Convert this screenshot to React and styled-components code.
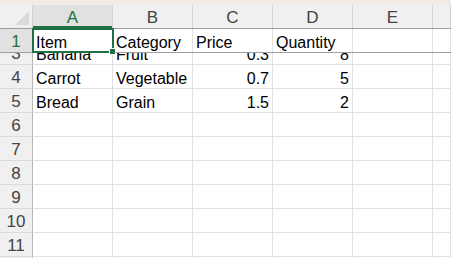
import styled, { createGlobalStyle } from "styled-components";

const Global = createGlobalStyle`
  html, body {
    margin: 0;
    padding: 0;
    background: #ffffff;
  }
  body {
    font-family: "Liberation Sans", Arial, sans-serif;
  }
`;

const Sheet = styled.div`
  width: 451px;
  height: 258px;
  overflow: hidden;
  display: flex;
  flex-direction: column;
  background: #ffffff;
`;

const TopStrip = styled.div`
  height: 5px;
  flex: none;
  background: #f0ebe3;
`;

const Row = styled.div`
  display: grid;
  grid-template-columns: 33px repeat(5, 80px) 1fr;
  height: 24px;
  flex: none;
  box-sizing: border-box;
`;

const HeaderRow = styled(Row)`
  background: #f0f0f0;
  border-bottom: 1px solid #9f9f9f;
`;

const FrozenRow = styled(Row)`
  border-bottom: 1px solid #9f9f9f;
`;

const Corner = styled.div`
  position: relative;
  border-right: 1px solid #d4d4d4;
  &::after {
    content: "";
    position: absolute;
    right: 3px;
    bottom: 3px;
    width: 0;
    height: 0;
    border-left: 14px solid transparent;
    border-bottom: 14px solid #dadada;
  }
`;

const ColHead = styled.div`
  display: flex;
  align-items: flex-end;
  justify-content: center;
  font-size: 17px;
  box-sizing: border-box;
  border-right: 1px solid #d4d4d4;
  color: ${(p) => (p.$active ? "#1e7145" : "#444444")};
  background: ${(p) => (p.$active ? "#e1e1e1" : "transparent")};
  box-shadow: ${(p) => (p.$active ? "inset 0 -2px 0 #1e7145" : "none")};
  padding-bottom: 0;
`;

const RowHead = styled.div`
  display: flex;
  align-items: flex-end;
  justify-content: center;
  padding-bottom: 0;
  font-size: 17px;
  box-sizing: border-box;
  background: ${(p) => (p.$active ? "#e1e1e1" : "#f0f0f0")};
  color: ${(p) => (p.$active ? "#1e7145" : "#444444")};
  border-right: 1px solid #b8b8b8;
  border-bottom: ${(p) => (p.$last ? "none" : "1px solid #dadada")};
`;

const Cell = styled.div`
  position: relative;
  display: flex;
  align-items: flex-end;
  justify-content: ${(p) => (p.$num ? "flex-end" : "flex-start")};
  padding: 0 3px 0 3px;
  box-sizing: border-box;
  font-size: 16px;
  color: #000000;
  white-space: nowrap;
  overflow: visible;
  border-right: 1px solid #e1e1e1;
  border-bottom: ${(p) => (p.$last ? "none" : "1px solid #e1e1e1")};
`;

const ActiveCell = styled(Cell)`
  outline: 2px solid #1e7145;
  outline-offset: -1px;
  z-index: 1;
  &::after {
    content: "";
    position: absolute;
    right: -4px;
    bottom: -3px;
    width: 5px;
    height: 5px;
    background: #1e7145;
    border: 1px solid #ffffff;
  }
`;

const Body = styled.div`
  flex: 1;
  overflow: hidden;
`;

const Scrolled = styled.div`
  margin-top: -12px;
`;

const columns = ["A", "B", "C", "D", "E", ""];

const data = [
  { n: 3, cells: ["Banana", "Fruit", 0.3, 8] },
  { n: 4, cells: ["Carrot", "Vegetable", 0.7, 5] },
  { n: 5, cells: ["Bread", "Grain", 1.5, 2] },
  { n: 6, cells: [] },
  { n: 7, cells: [] },
  { n: 8, cells: [] },
  { n: 9, cells: [] },
  { n: 10, cells: [] },
  { n: 11, cells: [] },
  { n: 12, cells: [] },
];

const DataRow = ({ n, cells }) => (
  <Row>
    <RowHead>{n}</RowHead>
    {columns.map((c, i) => {
      const v = cells[i];
      return (
        <Cell key={i} $num={typeof v === "number"}>
          {v ?? ""}
        </Cell>
      );
    })}
  </Row>
);

const App = () => {
  return (
    <>
      <Global />
      <Sheet>
        <TopStrip />
        <HeaderRow>
          <Corner />
          {columns.map((c, i) => (
            <ColHead key={i} $active={c === "A"}>
              {c}
            </ColHead>
          ))}
        </HeaderRow>
        <FrozenRow>
          <RowHead $active $last>
            1
          </RowHead>
          <ActiveCell $last>Item</ActiveCell>
          <Cell $last>Category</Cell>
          <Cell $last>Price</Cell>
          <Cell $last>Quantity</Cell>
          <Cell $last />
          <Cell $last />
        </FrozenRow>
        <Body>
          <Scrolled>
            {data.map((r) => (
              <DataRow key={r.n} n={r.n} cells={r.cells} />
            ))}
          </Scrolled>
        </Body>
      </Sheet>
    </>
  );
};

export default App;
